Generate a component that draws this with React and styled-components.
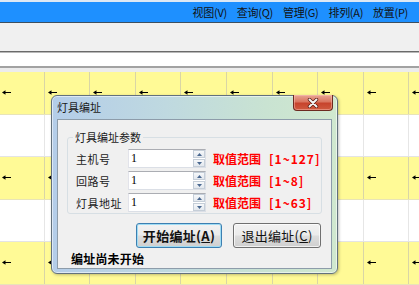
import styled, { createGlobalStyle } from 'styled-components'

const GlobalStyle = createGlobalStyle`
  html, body {
    margin: 0;
    padding: 0;
  }
  body {
    font-family: "Noto Sans CJK SC", "Liberation Sans", sans-serif;
    background: #ffffff;
    color: #000;
  }
`

const Screen = styled.div`
  position: relative;
  width: 419px;
  height: 285px;
  overflow: hidden;
  display: flex;
  flex-direction: column;
`

const TopEdge = styled.div`
  height: 2px;
  background: #dde8f4;
`

const MenuBar = styled.div`
  height: 21px;
  background: #1e90ff;
  border-bottom: 1px solid #3d4f60;
  display: flex;
  justify-content: flex-end;
  align-items: center;
  gap: 10px;
  padding-right: 11px;
`

const MenuItem = styled.span`
  font-size: 11px;
  line-height: 14px;
  color: #111;
  letter-spacing: -0.3px;
`

const ToolBar = styled.div`
  height: 28px;
  background: #f0f0f0;
  border-bottom: 1px solid #6a6a6a;
`

const AddressBand = styled.div`
  height: 14px;
  background: #ffffff;
  border-top: 1px solid #b8b8b8;
  border-bottom: 2px solid #a2a2a2;
`

const GridGap = styled.div`
  height: 4px;
  background: #ececec;
`

const Row = styled.div`
  flex: none;
  box-sizing: border-box;
  height: ${p => p.$h}px;
  display: grid;
  grid-template-columns: repeat(10, 45.6px);
  margin-left: -1px;
  background: ${p => (p.$lit ? '#fffa96' : '#ffffff')};
  border-bottom: 1px solid ${p => (p.$lit ? '#e8e4b8' : '#e4e4e4')};
`

const Cell = styled.div`
  border-right: 1px solid ${p => (p.$lit ? '#d9d5a6' : '#e6e6e6')};
  padding: 4px 0 0 3px;
`

function Arrow() {
  return (
    <svg width="9" height="5" viewBox="0 0 9 5">
      <path d="M0 2.5 L3.5 0.3 L3.5 4.7 Z" fill="#000" />
      <line x1="3" y1="2.5" x2="9" y2="2.5" stroke="#000" strokeWidth="1" />
    </svg>
  )
}

const Dialog = styled.div`
  position: absolute;
  left: 51px;
  top: 95px;
  width: 287px;
  height: 179px;
  box-sizing: border-box;
  border: 1px solid #62717d;
  border-radius: 6px;
  background: linear-gradient(to right, #b4cde9 0%, #bfd9e0 40%, #c9e3d2 75%, #d0e8cf 100%);
  box-shadow: inset 0 0 0 1px rgba(255, 255, 255, 0.55), 1px 1px 3px rgba(0, 0, 0, 0.25);
  padding: 0 5px 4px 5px;
  display: flex;
  flex-direction: column;
`

const TitleBar = styled.div`
  height: 23px;
  display: flex;
  justify-content: space-between;
  align-items: flex-start;
`

const Title = styled.span`
  font-size: 11px;
  line-height: 14px;
  padding-top: 4px;
  color: #1a1a1a;
`

const CloseButton = styled.div`
  width: 40px;
  height: 16px;
  margin: -1px -1px 0 0;
  box-sizing: border-box;
  border: 1px solid #6c2a20;
  border-top: none;
  border-radius: 0 0 4px 4px;
  background: linear-gradient(#e9a594 0%, #d9755f 45%, #c7432c 55%, #cf5a3f 100%);
  box-shadow: inset 0 0 0 1px rgba(255, 200, 190, 0.45);
  display: flex;
  align-items: center;
  justify-content: center;
`

const Client = styled.div`
  flex: 1;
  box-sizing: border-box;
  background: #f0f0f0;
  border: 1px solid #8d9caa;
  display: flex;
  flex-direction: column;
`

const Group = styled.fieldset`
  margin: 10px 9px 0;
  padding: 5px 0 1px 8px;
  border: 1px solid #d7dfe4;
  border-radius: 3px;
  display: flex;
  flex-direction: column;
  gap: 3px;
`

const GroupTitle = styled.legend`
  font-size: 11px;
  line-height: 14px;
  padding: 0 2px;
  margin-left: -3px;
  color: #1a1a1a;
`

const FieldRow = styled.div`
  height: 19px;
  display: flex;
  align-items: center;
  white-space: nowrap;
`

const FieldLabel = styled.span`
  flex: none;
  width: 52px;
  font-size: 11px;
  line-height: 14px;
  letter-spacing: 0.5px;
  color: #1a1a1a;
`

const SpinBox = styled.div`
  flex: none;
  width: 78px;
  height: 19px;
  box-sizing: border-box;
  background: #fff;
  border: 1px solid #dbdfe6;
  border-top-color: #abadb3;
  border-left-color: #e2e3ea;
  display: flex;
  justify-content: space-between;
`

const SpinValue = styled.span`
  font-family: "Liberation Serif", serif;
  font-size: 12px;
  line-height: 16px;
  padding-left: 2px;
`

const SpinButtons = styled.div`
  width: 12px;
  display: flex;
  flex-direction: column;
  gap: 1px;
`

const SpinPart = styled.div`
  flex: 1;
  box-sizing: border-box;
  border: 1px solid #c5ced8;
  background: linear-gradient(#f6f8fa, #e3e8ee);
  display: flex;
  align-items: center;
  justify-content: center;
`

function Tri({ up }) {
  return (
    <svg width="5" height="3" viewBox="0 0 5 3">
      <path d={up ? 'M0 3 L2.5 0 L5 3 Z' : 'M0 0 L5 0 L2.5 3 Z'} fill="#4a6890" />
    </svg>
  )
}

const RangeText = styled.span`
  flex: none;
  margin-left: 7px;
  font-size: 12px;
  line-height: 14px;
  font-weight: bold;
  color: #ff0000;
  display: flex;
  gap: 8px;
`

const RangeValue = styled.span`
  letter-spacing: 1px;
`

const ButtonRow = styled.div`
  display: flex;
  gap: 11px;
  margin-top: 9px;
  padding-left: 78px;
`

const Button = styled.div`
  width: ${p => p.$w}px;
  height: 25px;
  box-sizing: border-box;
  border: 1px solid ${p => (p.$primary ? '#3c7fb1' : '#707070')};
  border-radius: 3px;
  background: linear-gradient(#f2f2f2 0%, #ebebeb 48%, #dddddd 52%, #cfcfcf 100%);
  box-shadow: inset 0 0 0 1px ${p => (p.$primary ? '#9fdcf4' : 'rgba(255,255,255,0.7)')};
  display: flex;
  align-items: center;
  justify-content: center;
  font-size: 13px;
  line-height: 16px;
  font-weight: ${p => (p.$primary ? 'bold' : 'normal')};
  color: #111;
  letter-spacing: 0.3px;
  u {
    text-decoration: underline;
  }
`

const Status = styled.div`
  margin-top: 4px;
  padding-left: 13px;
  font-size: 12px;
  line-height: 13px;
  font-weight: bold;
  letter-spacing: 0.2px;
`

const menus = ['视图(V)', '查询(Q)', '管理(G)', '排列(A)', '放置(P)']
const rows = [
  { lit: true, h: 43 },
  { lit: false, h: 42 },
  { lit: true, h: 43 },
  { lit: false, h: 42 },
  { lit: true, h: 43 },
]
const fields = [
  { label: '主机号', range: '[1~127]' },
  { label: '回路号', range: '[1~8]' },
  { label: '灯具地址', range: '[1~63]' },
]

export default function App() {
  return (
    <>
      <GlobalStyle />
      <Screen>
        <TopEdge />
        <MenuBar>
          {menus.map(m => (
            <MenuItem key={m}>{m}</MenuItem>
          ))}
        </MenuBar>
        <ToolBar />
        <AddressBand />
        <GridGap />
        {rows.map((r, i) => (
          <Row key={i} $lit={r.lit} $h={r.h}>
            {Array.from({ length: 10 }).map((_, j) => (
              <Cell key={j} $lit={r.lit}>
                {r.lit && <Arrow />}
              </Cell>
            ))}
          </Row>
        ))}

        <Dialog>
          <TitleBar>
            <Title>灯具编址</Title>
            <CloseButton>
              <svg width="12" height="10" viewBox="0 0 12 10">
                <path d="M2.5 1.5 L9.5 8.5 M9.5 1.5 L2.5 8.5" stroke="#5a1a12" strokeWidth="3.4" strokeLinecap="round" />
                <path d="M2.5 1.5 L9.5 8.5 M9.5 1.5 L2.5 8.5" stroke="#f4f4f4" strokeWidth="2" strokeLinecap="round" />
              </svg>
            </CloseButton>
          </TitleBar>
          <Client>
            <Group>
              <GroupTitle>灯具编址参数</GroupTitle>
              {fields.map(f => (
                <FieldRow key={f.label}>
                  <FieldLabel>{f.label}</FieldLabel>
                  <SpinBox>
                    <SpinValue>1</SpinValue>
                    <SpinButtons>
                      <SpinPart>
                        <Tri up />
                      </SpinPart>
                      <SpinPart>
                        <Tri />
                      </SpinPart>
                    </SpinButtons>
                  </SpinBox>
                  <RangeText>
                    <span>取值范围</span>
                    <RangeValue>{f.range}</RangeValue>
                  </RangeText>
                </FieldRow>
              ))}
            </Group>
            <ButtonRow>
              <Button $primary $w={86}>
                开始编址(<u>A</u>)
              </Button>
              <Button $w={88}>
                退出编址(<u>C</u>)
              </Button>
            </ButtonRow>
            <Status>编址尚未开始</Status>
          </Client>
        </Dialog>
      </Screen>
    </>
  )
}
